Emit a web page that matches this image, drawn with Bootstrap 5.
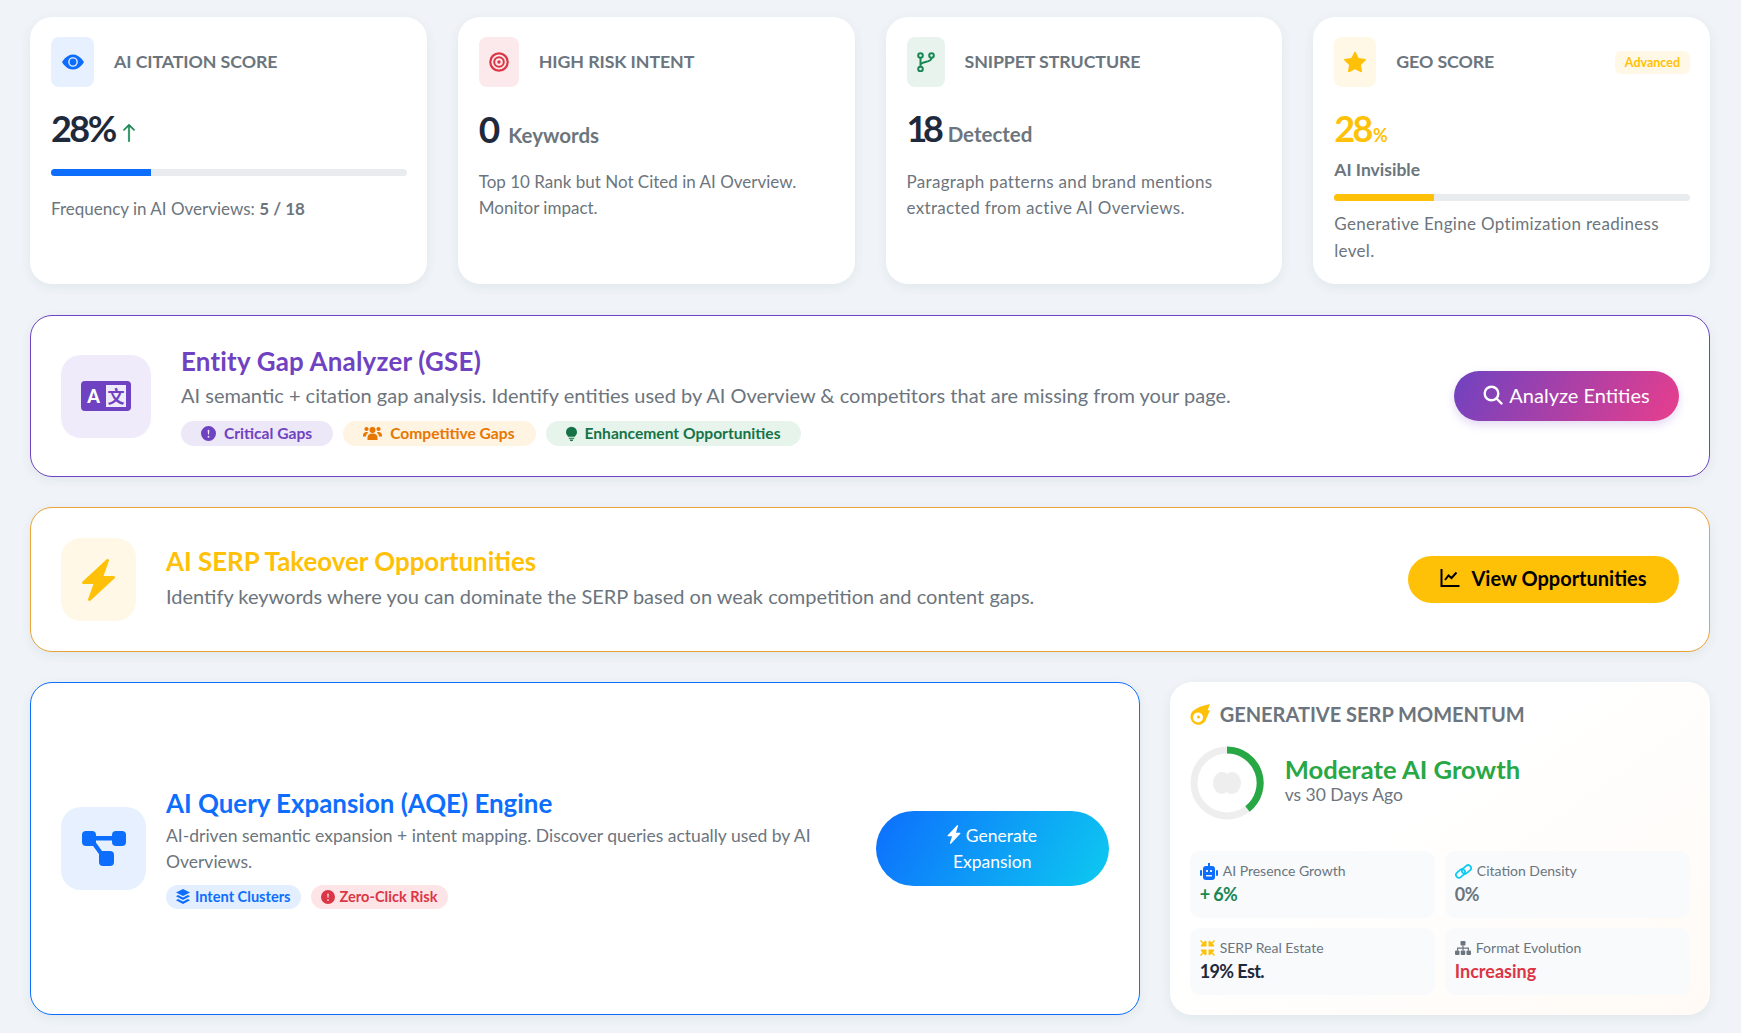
<!DOCTYPE html>
<html lang="en"><head><meta charset="utf-8"><title>AI Overview</title>
<link href="https://cdn.jsdelivr.net/npm/bootstrap@5.3.0/dist/css/bootstrap.min.css" rel="stylesheet">
<style>
body{background:#f0f4f8;font-family:"Lato","Liberation Sans",sans-serif;color:#6c757d;height:1033px;overflow:hidden}
.page{padding:17px 31px 0 30px}
.grid-row{--bs-gutter-x:31px;--bs-gutter-y:0}
.tile-card{background:#fff;border-radius:22px;box-shadow:0 3px 12px rgba(30,50,80,.07);padding:20px 20px 20px 21px;height:267px}
.tile-head{height:50px;margin-bottom:20px;display:flex;align-items:center;gap:20px}
.sq{height:50px;border-radius:8px;display:flex;align-items:center;justify-content:center;flex:none}
.sq-blue{width:43px;background:#e7f0ff;color:#0d6efd}
.sq-red{width:40px;background:#fbe9eb;color:#dc3545}
.sq-green{width:38px;background:#e8f3ee;color:#198754}
.sq-amber{width:42px;background:#fff8e6;color:#ffc107}
.tile-title{font-size:17.8px;font-weight:700;color:#6c757d;letter-spacing:-.1px;padding-bottom:2px}
.adv{margin-left:auto;background:#fff8e6;color:#ffc107;font-size:12.5px;font-weight:700;border-radius:6px;padding:0 10px;height:23px;line-height:23px}
.val{font-size:36px;font-weight:700;line-height:43px;color:#1e293b;height:43px;display:flex;align-items:baseline}
.val .num{letter-spacing:-.07em}
.val small{font-size:20.5px;font-weight:700;color:#6c757d;margin-left:8px}
.val.amber{color:#ffc107}.val.amber small{color:#ffc107;font-size:18px;margin-left:2px}
.bar-track{height:7px;background:#e9ecef;border-radius:4px;overflow:hidden}
.bar-fill{height:100%}
.note{font-size:17px;line-height:26px;margin:0}
.note b{font-weight:700}
.note-wide{letter-spacing:.32px}
.feature{background:#fff;border-radius:22px;border:1px solid;box-shadow:0 3px 12px rgba(30,50,80,.07);display:flex;align-items:center;padding:0 30px}
.f-purple{border-color:#6f42c1;height:162px;margin-top:31px}
.f-amber{border-color:#e9a338;height:145px;margin-top:30px}
.f-blue{border-color:#0d6efd;height:333px}
.big-sq{height:83px;border-radius:20px;display:flex;align-items:center;justify-content:center;flex:none}
.f-title{font-size:25.9px;font-weight:700;line-height:30px;margin:0}
.f-text{font-size:20px;line-height:30px;margin:5px 0 0}
.pill{display:inline-flex;align-items:center;gap:8px;height:25px;border-radius:13px;padding:0 21px 0 20px;font-size:15.6px;font-weight:700}
.pill-sm{padding:0 10px;gap:5px;height:24px;font-size:14.6px}
.cta{border:0;border-radius:30px;font-size:20px;display:inline-flex;align-items:center;justify-content:center;gap:6px;flex:none}
.cta-nudge{padding-bottom:4px}
.momentum{background:linear-gradient(145deg,#fff 40%,#fffaf5);border-radius:22px;box-shadow:0 3px 12px rgba(30,50,80,.07);height:333px;padding:20px;margin-left:-1px}
.m-title{font-size:20px;font-weight:700;display:flex;align-items:center;gap:10px;height:24px;margin-bottom:21px}
.m-stat{background:#f8fafc;border-radius:10px;height:67px;padding:10px 10px 0}
.m-label{font-size:14px;line-height:20px;display:flex;align-items:center;gap:5px}
.m-val{font-size:18px;font-weight:700;line-height:26px;margin-top:0}
.m-tight{letter-spacing:-.6px}
svg{display:block}
</style></head><body>
<div class="page">
<div class="row grid-row">
 <div class="col-3"><div class="tile-card">
  <div class="tile-head"><div class="sq sq-blue"><svg width="22" height="22" viewBox="0 0 16 16" fill="currentColor"><path d="M10.5 8a2.5 2.5 0 1 1-5 0 2.5 2.5 0 0 1 5 0"/><path d="M0 8s3-5.5 8-5.5S16 8 16 8s-3 5.5-8 5.5S0 8 0 8m8 3.5a3.5 3.5 0 1 0 0-7 3.5 3.5 0 0 0 0 7"/></svg></div><div class="tile-title">AI CITATION SCORE</div></div>
  <div class="val"><span class="num">28%</span><svg class="align-self-end" style="margin:0 0 6px 4px" width="20" height="22" viewBox="0 0 16 16" fill="#198754" stroke="#198754" stroke-width=".5"><path fill-rule="evenodd" d="M8 15a.5.5 0 0 0 .5-.5V2.707l3.146 3.147a.5.5 0 0 0 .708-.708l-4-4a.5.5 0 0 0-.708 0l-4 4a.5.5 0 1 0 .708.708L7.5 2.707V14.5a.5.5 0 0 0 .5.5"/></svg></div>
  <div class="bar-track" style="margin-top:19px"><div class="bar-fill bg-primary" style="width:28%"></div></div>
  <p class="note" style="margin-top:20px">Frequency in AI Overviews: <b>5 / 18</b></p>
 </div></div>
 <div class="col-3"><div class="tile-card">
  <div class="tile-head"><div class="sq sq-red"><svg width="20" height="20" viewBox="0 0 20 20" fill="none" stroke="currentColor"><circle cx="10" cy="10" r="8.7" stroke-width="2.2"/><circle cx="10" cy="10" r="4.8" stroke-width="2"/><circle cx="10" cy="10" r="1.7" fill="currentColor" stroke="none"/></svg></div><div class="tile-title">HIGH RISK INTENT</div></div>
  <div class="val" style="font-size:37px">0<small>Keywords</small></div>
  <p class="note" style="margin-top:19px">Top 10 Rank but Not Cited in AI Overview. Monitor impact.</p>
 </div></div>
 <div class="col-3"><div class="tile-card">
  <div class="tile-head"><div class="sq sq-green"><svg width="18" height="20" viewBox="0 0 18 20" fill="none" stroke="currentColor" stroke-width="2"><circle cx="3.5" cy="3.5" r="2.3"/><circle cx="3.5" cy="17" r="2.3"/><circle cx="14.5" cy="3.5" r="2.3"/><path d="M3.5 6v8.5M14.5 6c0 5-11 3-11 7"/></svg></div><div class="tile-title">SNIPPET STRUCTURE</div></div>
  <div class="val"><span class="num" style="letter-spacing:-.12em">18</span><small>Detected</small></div>
  <p class="note note-wide" style="margin-top:19px">Paragraph patterns and brand mentions extracted from active AI Overviews.</p>
 </div></div>
 <div class="col-3"><div class="tile-card">
  <div class="tile-head"><div class="sq sq-amber"><svg width="22" height="22" viewBox="0 0 16 16" fill="currentColor"><path d="M3.612 15.443c-.386.198-.824-.149-.746-.592l.83-4.73L.173 6.765c-.329-.314-.158-.888.283-.95l4.898-.696L7.538.792c.197-.39.73-.39.927 0l2.184 4.327 4.898.696c.441.062.612.636.282.95l-3.522 3.356.83 4.73c.078.443-.36.79-.746.592L8 13.187l-4.389 2.256z"/></svg></div><div class="tile-title">GEO SCORE</div><span class="adv">Advanced</span></div>
  <div class="val amber"><span class="num">28</span><small>%</small></div>
  <div class="fw-bold" style="font-size:17.5px;line-height:26px;margin-top:7px">AI Invisible</div>
  <div class="bar-track" style="margin-top:11px"><div class="bar-fill" style="width:28%;background:#ffc107"></div></div>
  <p class="note note-wide" style="margin-top:10px;line-height:26.5px">Generative Engine Optimization readiness<br>level.</p>
 </div></div>
</div>

<div class="feature f-purple">
 <div class="big-sq" style="width:90px;background:#f0ebfa"><svg width="50" height="30" viewBox="0 0 50 30"><rect width="50" height="30" rx="4" fill="#6f42c1"/><rect x="25" y="4" width="20" height="22" fill="#f0ebfa"/><text x="12.5" y="21.5" text-anchor="middle" font-family="Lato,sans-serif" font-weight="900" font-size="18" fill="#fff">A</text><text x="35" y="22" text-anchor="middle" font-family="Noto Sans CJK SC,sans-serif" font-weight="700" font-size="17" fill="#6f42c1">文</text></svg></div>
 <div class="flex-grow-1" style="margin-left:30px">
  <h3 class="f-title" style="color:#6f42c1;letter-spacing:.22px">Entity Gap Analyzer (GSE)</h3>
  <p class="f-text" style="margin-top:4px">AI semantic + citation gap analysis. Identify entities used by AI Overview &amp; competitors that are missing from your page.</p>
  <div class="d-flex" style="gap:10px;margin-top:11px">
   <span class="pill" style="background:#ede8f8;color:#6f42c1"><svg width="15" height="15" viewBox="0 0 16 16" fill="currentColor"><path d="M16 8A8 8 0 1 1 0 8a8 8 0 0 1 16 0M8 4a.9.9 0 0 0-.9.99l.35 3.51a.55.55 0 0 0 1.1 0l.35-3.51A.9.9 0 0 0 8 4m0 6.5a1 1 0 1 0 0 2 1 1 0 0 0 0-2"/></svg>Critical Gaps</span>
   <span class="pill" style="background:#fff3e2;color:#e67700"><svg width="19" height="15" viewBox="0 0 19 15" fill="currentColor"><circle cx="9.5" cy="4" r="3"/><circle cx="3.5" cy="3" r="2.1"/><circle cx="15.5" cy="3" r="2.1"/><path d="M4.5 14v-2.5c0-2.5 2-4 5-4s5 1.500 5 4V14zM0 9.500C0 7.500 1.500 6 3.500 6c.7 0 1.200.2 1.600.4C3.800 7.500 3 9 3 10.500H0zM19 9.500C19 7.500 17.500 6 15.500 6c-.7 0-1.200.2-1.600.4 1.300 1.100 2.100 2.600 2.100 4.100h3z"/></svg>Competitive Gaps</span>
   <span class="pill" style="background:#e7f4ec;color:#157347"><svg width="11" height="16" viewBox="0 0 12 16" fill="currentColor"><path d="M6 0a6 6 0 0 1 6 6c0 2.300-1.500 3.500-2.400 5H2.400C1.500 9.500 0 8.300 0 6a6 6 0 0 1 6-6M3 12h6v1.200H3zM4 14h4a2 2 0 0 1-4 0"/></svg>Enhancement Opportunities</span>
  </div>
 </div>
 <button class="cta cta-nudge text-white" style="width:225px;height:50px;background:linear-gradient(120deg,#6f42c1,#e83e8c);box-shadow:0 4px 10px rgba(111,66,193,.2)"><svg width="20" height="20" viewBox="0 0 20 20" fill="none" stroke="#fff" stroke-width="2.400"><circle cx="8.500" cy="8.500" r="6.800"/><path d="M13.500 13.500l5 5" stroke-linecap="round"/></svg>Analyze Entities</button>
</div>

<div class="feature f-amber">
 <div class="big-sq" style="width:75px;background:#fff8e6"><svg width="33" height="42" viewBox="2.500 0 11 16" preserveAspectRatio="none" fill="#ffc107"><path d="M11.251.068a.5.5 0 0 1 .227.58L9.677 6.5H13a.5.5 0 0 1 .364.843l-8 8.5a.5.5 0 0 1-.842-.49L6.323 9.5H3a.5.5 0 0 1-.364-.843l8-8.5a.5.5 0 0 1 .615-.09z"/></svg></div>
 <div class="flex-grow-1" style="margin-left:30px;padding-bottom:2px">
  <h3 class="f-title" style="color:#ffc107">AI SERP Takeover Opportunities</h3>
  <p class="f-text">Identify keywords where you can dominate the SERP based on weak competition and content gaps.</p>
 </div>
 <button class="cta cta-nudge fw-bold text-black" style="width:271px;height:47px;background:#ffc107;gap:11px"><svg width="20" height="20" viewBox="0 0 20 20" fill="none" stroke="#000" stroke-width="2"><path d="M1.500 1v17h18M5 12l3.500-4.500 3 2.500 5-5.500"/></svg>View Opportunities</button>
</div>

<div class="row grid-row" style="margin-top:30px">
 <div class="col-8"><div class="feature f-blue">
  <div class="big-sq" style="width:85px;background:#e7f0ff"><svg width="44" height="35" viewBox="0 0 44 35" fill="#0d6efd"><rect x="0" y="0" width="14" height="15" rx="4"/><rect x="30" y="0" width="14" height="15" rx="4"/><rect x="17" y="20" width="15" height="15" rx="4"/><path d="M13 5h18v4.500H13zM10 13.500l3.500-2.500 8 11-3.500 2.500z"/></svg></div>
  <div class="flex-grow-1" style="margin-left:20px;margin-right:29px;padding-bottom:1px">
   <h3 class="f-title" style="color:#0d6efd">AI Query Expansion (AQE) Engine</h3>
   <p class="note" style="margin-top:5px;font-size:17.5px">AI-driven semantic expansion + intent mapping. Discover queries actually used by AI Overviews.</p>
   <div class="d-flex" style="gap:10px;margin-top:10px">
    <span class="pill pill-sm" style="background:#e3eeff;color:#0d6efd"><svg width="14" height="15" viewBox="0 0 14 15" fill="currentColor"><path d="M7 0l7 3.500L7 7 0 3.500zM2 6l5 2.500L12 6l2 1.200L7 11 0 7.200zM2 10l5 2.500 5-2.500 2 1.200L7 15l-7-3.800z"/></svg>Intent Clusters</span>
    <span class="pill pill-sm" style="background:#fde5e7;color:#dc3545"><svg width="14" height="14" viewBox="0 0 16 16" fill="currentColor"><path d="M16 8A8 8 0 1 1 0 8a8 8 0 0 1 16 0M8 4a.9.9 0 0 0-.9.99l.35 3.51a.55.55 0 0 0 1.100 0l.35-3.51A.9.9 0 0 0 8 4m0 6.500a1 1 0 1 0 0 2 1 1 0 0 0 0-2"/></svg>Zero-Click Risk</span>
   </div>
  </div>
  <button class="cta text-white d-block" style="width:233px;height:75px;border-radius:38px;background:linear-gradient(120deg,#0d6efd,#0dcaf0);font-size:17.500px;line-height:26px"><svg class="d-inline-block align-text-top" width="14" height="19" viewBox="2 0 12 16" fill="#fff"><path d="M11.251.068a.5.5 0 0 1 .227.58L9.677 6.500H13a.5.5 0 0 1 .364.843l-8 8.500a.5.5 0 0 1-.842-.49L6.323 9.500H3a.5.5 0 0 1-.364-.843l8-8.500a.5.5 0 0 1 .615-.09z"/></svg> Generate<br>Expansion</button>
 </div></div>
 <div class="col-4"><div class="momentum">
  <div class="m-title"><svg width="20" height="23" viewBox="0 0 20 23" fill="#ffc107"><path fill-rule="evenodd" d="M20 1l-2.500 6.500L20 7c-1.500 4-3 7-4 9.500A8 8 0 1 1 3.500 7.500C8 4 13 2.500 20 1M8 9.500a5 5 0 1 0 0 10 5 5 0 0 0 0-10m.5 3a1.500 1.500 0 1 1 0 3 1.500 1.500 0 0 1 0-3"/></svg>GENERATIVE SERP MOMENTUM</div>
  <div class="d-flex align-items-center" style="gap:21px;height:73px;margin-top:-1px">
   <svg width="74" height="74" viewBox="0 0 74 74" fill="none"><circle cx="37" cy="37" r="33" stroke="#eee" stroke-width="7"/><path d="M37 4A33 33 0 0 1 57.500 63" stroke="#28a745" stroke-width="7"/><ellipse cx="32" cy="37" rx="9" ry="11" fill="#eee"/><ellipse cx="42" cy="37" rx="9" ry="11" fill="#eee"/></svg>
   <div style="margin-top:-7px"><div class="fw-bold" style="color:#28a745;font-size:25.600px;line-height:32px">Moderate AI Growth</div><div style="font-size:17.500px;line-height:20px">vs 30 Days Ago</div></div>
  </div>
  <div class="row" style="--bs-gutter-x:10px;--bs-gutter-y:10px;margin-top:22px">
   <div class="col-6"><div class="m-stat"><div class="m-label"><svg width="18" height="17" viewBox="0 0 18 17" fill="#0d6efd"><rect x="3" y="3" width="12" height="14" rx="3"/><rect x="8" y="0" width="2" height="3"/><rect x="0" y="7" width="2" height="6" rx="1"/><rect x="16" y="7" width="2" height="6" rx="1"/><rect x="6" y="7" width="2" height="2" fill="#e7f0ff"/><rect x="10" y="7" width="2" height="2" fill="#e7f0ff"/><rect x="6" y="12" width="6" height="1.500" fill="#e7f0ff"/></svg>AI Presence Growth</div><div class="m-val m-tight" style="color:#198754">+ 6%</div></div></div>
   <div class="col-6"><div class="m-stat"><div class="m-label"><svg width="17" height="15" viewBox="0 0 17 15" fill="none" stroke="#0dcaf0" stroke-width="1.800"><rect x=".5" y="6.600" width="10" height="5.800" rx="2.900" transform="rotate(-40 5.500 9.500)"/><rect x="6.500" y="2.600" width="10" height="5.800" rx="2.900" transform="rotate(-40 11.500 5.500)"/></svg>Citation Density</div><div class="m-val m-tight">0%</div></div></div>
   <div class="col-6"><div class="m-stat"><div class="m-label"><svg width="15" height="16" viewBox="0 0 15 16" fill="#ffc107"><path d="M1 0l2.500 2.500L5.200.8 6.500 1v5.500H1L.8 5.200l1.700-1.700L0 1zM14 0l-2.500 2.500L9.800.8 8.500 1v5.500H14l.2-1.300-1.700-1.700L15 1zM1 16l2.500-2.500 1.700 1.700 1.300-.2V9.500H1l-.2 1.300 1.700 1.700L0 15zM14 16l-2.500-2.500-1.700 1.700-1.300-.2V9.500H14l.2 1.300-1.700 1.700L15 15z"/></svg>SERP Real Estate</div><div class="m-val m-tight" style="color:#1e293b">19% Est.</div></div></div>
   <div class="col-6"><div class="m-stat"><div class="m-label"><svg width="16" height="14" viewBox="0 0 16 14" fill="#6c757d"><rect x="5.500" y="0" width="5" height="4.500" rx="1"/><rect x="0" y="9.500" width="4.500" height="4.500" rx="1"/><rect x="5.750" y="9.500" width="4.500" height="4.500" rx="1"/><rect x="11.500" y="9.500" width="4.500" height="4.500" rx="1"/><path d="M7.400 4.500h1.200V6.500H14v3h-1.200V7.700H8.600v1.800H7.400V7.700H3.200v1.800H2v-3h5.400z"/></svg>Format Evolution</div><div class="m-val" style="color:#dc3545">Increasing</div></div></div>
  </div>
 </div></div>
</div>
</div>
<script src="https://cdn.jsdelivr.net/npm/bootstrap@5.3.0/dist/js/bootstrap.bundle.min.js"></script>
</body></html>
